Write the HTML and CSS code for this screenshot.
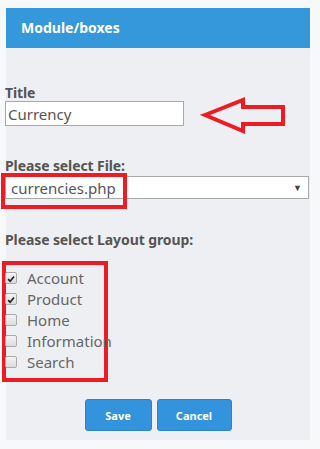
FILE: index.html
```html
<!DOCTYPE html>
<html>
<head>
<meta charset="utf-8">
<link rel="stylesheet" href="styles.css">
</head>
<body>
<div class="panel">
  <div class="panel-head">Module/boxes</div>
  <form class="panel-body">
    <label class="lbl lbl-title">Title</label>
    <input class="txt" type="text" value="Currency">
    <label class="lbl lbl-file">Please select File:</label>
    <div class="select">
      <span class="select-val">currencies.php</span>
      <span class="select-arrow">▼</span>
    </div>
    <label class="lbl lbl-layout">Please select Layout group:</label>
    <div class="checks">
      <div class="check"><span class="box on"><svg viewBox="0 0 12 12" width="12" height="12"><path d="M2.5 6.2 L5 8.6 L9.6 3" fill="none" stroke="#222" stroke-width="2"/></svg></span>Account</div>
      <div class="check"><span class="box on"><svg viewBox="0 0 12 12" width="12" height="12"><path d="M2.5 6.2 L5 8.6 L9.6 3" fill="none" stroke="#222" stroke-width="2"/></svg></span>Product</div>
      <div class="check"><span class="box"></span>Home</div>
      <div class="check"><span class="box"></span>Information</div>
      <div class="check"><span class="box"></span>Search</div>
    </div>
    <div class="actions">
      <button type="button" class="btn btn-save">Save</button>
      <button type="button" class="btn btn-cancel">Cancel</button>
    </div>
  </form>
</div>
<div class="mark mark-file"></div>
<div class="mark mark-checks"></div>
<svg class="mark-arrow" width="90" height="40" viewBox="200 95 90 40">
  <polygon points="205,115 243,100 243,107 283,107 283,124 243,124 243,131" fill="none" stroke="#ed1c24" stroke-width="4" stroke-linejoin="miter"/>
</svg>
</body>
</html>
```
FILE: styles.css
```css
html, body {
  margin: 0;
  padding: 0;
}
body {
  background: #f7f8fa;
  width: 320px;
  height: 449px;
  overflow: hidden;
  position: relative;
  font-family: "Noto Sans", "Open Sans", sans-serif;
  color: #555;
}
.panel {
  margin: 8px 10px 0 6px;
  width: 304px;
  height: 432px;
  background: #eeeff3;
}
.panel-head {
  height: 40px;
  background: #3598db;
  color: #fff;
  font-weight: 700;
  font-size: 14px;
  line-height: 40px;
  padding-left: 15px;
}
.panel-body {
  margin: 0 0 0 -1px;
  padding: 0;
  display: flex;
  flex-direction: column;
  align-items: flex-start;
}
.lbl {
  font-weight: 700;
  font-size: 14px;
  line-height: 18px;
  color: #555;
  display: block;
  letter-spacing: -0.1px;
}
.lbl-title { margin-top: 36px; }
.txt {
  margin: 0;
  margin-top: -1px;
  width: 179px;
  height: 25px;
  box-sizing: border-box;
  border: 1px solid #a9a9a9;
  background: #fff;
  padding: 0 2px;
  font-family: "Noto Sans", sans-serif;
  font-size: 15px;
  color: #555;
  outline: none;
}
.lbl-file { margin-top: 31px; }
.select {
  margin-top: 1px;
  width: 304px;
  height: 23px;
  box-sizing: border-box;
  border: 1px solid #a9a9a9;
  background: #fff;
  display: flex;
  align-items: center;
  justify-content: space-between;
  padding: 0 6px 0 5px;
  font-size: 15px;
}
.select-val { color: #555; }
.select-arrow { font-size: 9px; color: #444; }
.lbl-layout { margin-top: 32px; }
.checks {
  margin-top: 18px;
  display: flex;
  flex-direction: column;
  position: relative;
  z-index: 2;
}
.check {
  height: 21px;
  display: flex;
  align-items: center;
  font-size: 15px;
  color: #666;
}
.box {
  width: 12px;
  height: 12px;
  box-sizing: border-box;
  border: 1px solid #aaa;
  border-radius: 2px;
  background: linear-gradient(#f4f4f4, #dcdcdc);
  margin-right: 10px;
  display: flex;
}
.actions {
  align-self: center;
  margin-top: 27px;
  margin-left: 1px;
  display: flex;
  gap: 5px;
}
.btn {
  height: 32px;
  border: 1px solid #2a84cc;
  border-radius: 3px;
  background: #3393dd;
  color: #fff;
  font-family: "Noto Sans", sans-serif;
  font-weight: 700;
  font-size: 11px;
  padding: 0;
}
.btn-save { width: 67px; }
.btn-cancel { width: 75px; }
.mark {
  position: absolute;
  border: 4px solid #ed1c24;
  box-sizing: border-box;
  z-index: 1;
}
.mark-file {
  left: 1px;
  top: 173px;
  width: 126px;
  height: 36px;
}
.mark-checks {
  left: 2px;
  top: 261px;
  width: 106px;
  height: 121px;
}
.mark-arrow {
  position: absolute;
  left: 200px;
  top: 95px;
}
```
